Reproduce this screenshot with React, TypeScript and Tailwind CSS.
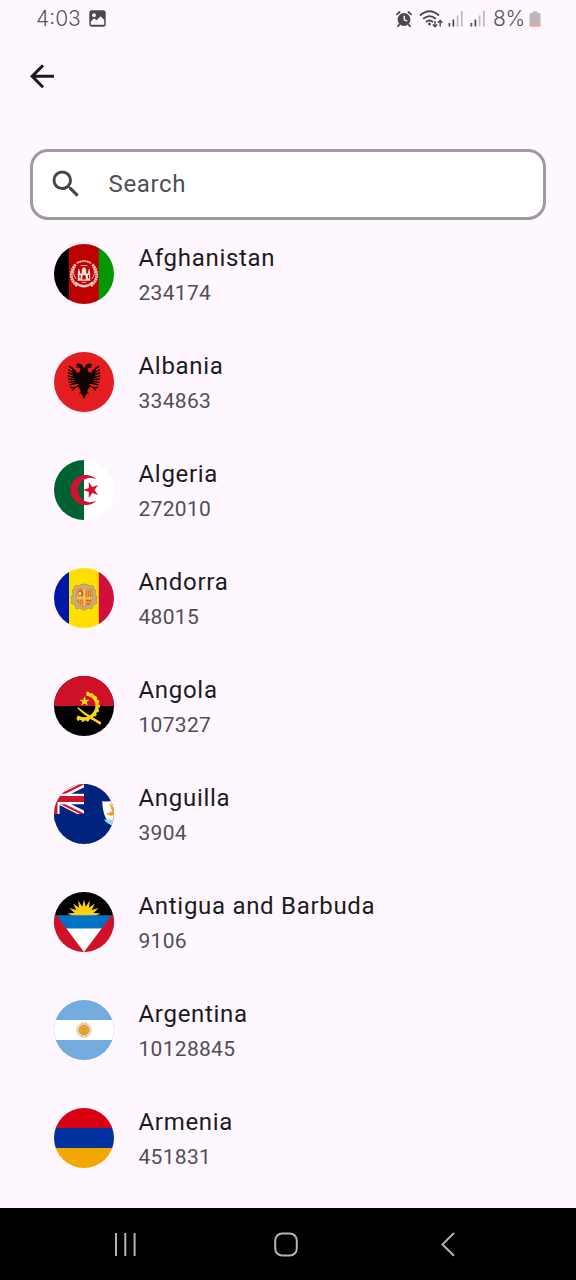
import type { ReactNode } from 'react';

type Country = { name: string; count: string; flag: ReactNode };

const angles = (n: number) => Array.from({ length: n }, (_, i) => (i * 360) / n);

const risingSun = Array.from({ length: 19 }, (_, i) => {
  const radius = i % 2 === 1 ? 17 : 10;
  const a = Math.PI - (i * Math.PI) / 18;
  return `${(30 + radius * Math.cos(a)).toFixed(2)},${(24.5 - radius * Math.sin(a)).toFixed(2)}`;
}).join(' ');

const Afghanistan = (
  <>
    <path fill="#000" d="M0 0h15.200v60H0z" />
    <path fill="#bf0000" d="M15 0h30v60H15z" />
    <path fill="#009900" d="M44.800 0H60v60H44.800z" />
    <g transform="translate(30 30.500) scale(1.120) translate(-30 -30.500)">
      <g stroke="#f0c9c4" fill="none">
        <path d="M22.500 21.500C17 28 17.500 36 24 40.500M37.500 21.500C43 28 42.500 36 36 40.500" strokeWidth="2.600" strokeDasharray="1.800 .4" />
        <path d="M23.500 20.500q6.500-4 13 0" strokeWidth="1.700" strokeDasharray="1.200 .4" />
        <path d="M22 37.500q8 7 16 0" strokeWidth="2" />
        <path d="M22 23.500q-3 6 1 11M38 23.500q3 6-1 11" strokeWidth=".8" />
      </g>
      <path fill="#f6dfdb" d="M24.500 36v-8l1-3 1 3v1.500h1.500V26q2-4 4 0v3.500h1.500V28l1-3 1 3v8z" />
      <path fill="#bf0000" d="M28.500 35v-3q1.500-2 3 0v3zM26 31h1v3h-1zM33.500 31h1v3h-1z" />
      <path stroke="#f0c9c4" strokeWidth=".8" d="M27 22.500h6M28 37.500h4" />
    </g>
  </>
);

const EagleHalf = (
  <g fill="#100303" stroke="#100303">
    <path
      stroke="none"
      d="M30.300 17.500 28.500 13.500Q26 10 21.500 12.500l2.200 1.200-2.200 1.800 3.500-.3 1.600 2.200-1.300 2.800-2.800.6Q19 18 17.500 13.500L19 22l1 5 1.500 4.500 3.500.5-2 2 3 3 1.500 5 2.800 5z"
    />
    <path
      fill="none"
      strokeWidth="1.400"
      d="M22 19.500 14.700 14M21 21.500 14 17.500M21 23.500 13.700 20.700M21 25.500 13.700 23.900M21.500 27.500 14 27M22 29.500 14.500 30.200M23 31 15.500 33"
    />
    <path fill="none" strokeWidth="1.100" d="M26 33 21 35.500 16.500 35.500M21 35.500 18 38.500M28 39 25.500 42" />
  </g>
);

const Albania = (
  <>
    <path fill="#e41e20" d="M0 0h60v60H0z" />
    {EagleHalf}
    <g transform="matrix(-1 0 0 1 60 0)">{EagleHalf}</g>
  </>
);

const Algeria = (
  <>
    <path fill="#fff" d="M0 0h60v60H0z" />
    <path fill="#006233" d="M0 0h30v60H0z" />
    <path fill="#d21034" d="M42.500 19.500A15.100 15.100 0 1 0 42.500 40.500A12.200 12.200 0 1 1 42.500 19.500z" />
    <path
      fill="#d21034"
      transform="translate(-7.200 -6) scale(1.200)"
      d="m30.300 30 4.700-1.600-.1-5 3 4 4.800-1.500-2.900 4.100 2.900 4.100-4.800-1.500-3 4 .1-5z"
    />
  </>
);

const Andorra = (
  <>
    <path fill="#0018a8" d="M0 0h15v60H0z" />
    <path fill="#fedf00" d="M15 0h30v60H15z" />
    <path fill="#d0103a" d="M44.800 0H60v60H44.800z" />
    <path
      fill="#c9ae72"
      stroke="#a98f5c"
      strokeWidth=".7"
      d="M20 19q2-3 4-1 6-4 12 0 2-2 4 1l-1 2 3 1-1 4q3 3 1 6l1 3-4 2-1 4-4-1q-4 4-8 0l-4 1-1-4-4-2 1-3q-2-3 1-6l-1-4 3-1z"
    />
    <path fill="#eda044" stroke="#c8803a" strokeWidth=".5" d="M22.500 21H38v10q0 5-7.800 8-7.700-3-7.700-8z" />
    <path fill="#f3d36b" d="M29.700 21h1.200v17h-1.200zM22.500 29.500H38v1.100H22.500z" />
    <path stroke="#d9702c" strokeWidth=".9" d="M32.500 22v7M34.500 22v7M36.500 22v7M24.500 32v3M26.500 32v4.500M28.500 32v5.500" />
    <path fill="#d9642c" d="M24 23q3-4 5 1v4h-4zM32 32h5v1.500h-5zM32 35h4v1.500h-4z" />
    <path fill="#f5ddc2" d="M25 24h2v3h-2z" />
  </>
);

const Angola = (
  <>
    <path fill="#000" d="M0 0h60v60H0z" />
    <path fill="#ce1126" d="M0 0h60v30H0z" />
    <g fill="none" stroke="#f9d616">
      <path d="M32.500 18C43 19 46.500 31 39.500 38.500 34.500 44 28 43.500 23 41" strokeWidth="3.400" />
      <path d="M32.500 16.500C44.500 18 49 31 41 39.500 35 46.500 27.500 45.500 22 42.500" strokeWidth="2" strokeDasharray="2.400 2.400" />
    </g>
    <path
      fill="#f9d616"
      d="M24 31q6.500 5.500 13.500 9.500l10 6-1.400 2.300-10-6.300q-7.500-4.500-12.800-10.300zM30.500 20l1.300 3.700h3.900l-3.100 2.300 1.200 3.800-3.300-2.200-3.300 2.200 1.200-3.800-3.100-2.300h3.900z"
    />
  </>
);

const Anguilla = (
  <>
    <path fill="#00247d" d="M0 0h60v60H0z" />
    <path stroke="#fff" strokeWidth="6" d="M-30 0 30 30M-30 30 30 0" />
    <path stroke="#cf142b" strokeWidth="2.200" d="M0 15.800 30 30.800M0 14.200 30-.8" />
    <path fill="#fff" d="M0 9.800h30v10.400H0z" />
    <path fill="#fff" d="M0 0h5.500v30H0z" />
    <path fill="#cf142b" d="M0 12h30v6H0zM0 0h3.500v30H0z" />
    <path fill="#00247d" d="M30 0h4v35h-4zM0 30h34v8H0z" />
    <path fill="#fff" d="M48.300 17q6 1.500 11.700-1v27q-11.500-7-11.700-26z" />
    <path fill="#9bd9e8" d="M50 35.500h10v6q-7-1-10-6z" />
    <path fill="#f6971f" d="M52 29q4 4 8 2v-8q-3-4-5-2 3 1 1.500 5l-1 3zM56 20q3-1 4 1v3z" />
    <path fill="#fff" d="M56 24q3 1 1.500 4L55 27z" />
  </>
);

const Antigua = (
  <>
    <path fill="#000" d="M0 0h60v24H0z" />
    <polygon fill="#fcd116" points={risingSun} />
    <path fill="#0072c6" d="M0 23.300h60V37H0z" />
    <path fill="#fff" d="M0 36.500h60V60H0z" />
    <path fill="#ce1126" d="M0 20 30 60H0zM60 20 30 60h30z" />
  </>
);

const Argentina = (
  <>
    <path fill="#74acdf" d="M0 0h60v60H0z" />
    <path fill="#fff" d="M0 20h60v20H0z" />
    <g stroke="#d6ac72" strokeWidth=".75">
      {angles(32).map((a) => (
        <path key={a} d="M30 25.500V22.300" transform={`rotate(${a} 30 30)`} />
      ))}
    </g>
    <circle cx="30" cy="30" r="4.600" fill="#eea92b" stroke="#b98638" strokeWidth=".8" />
    <path stroke="#c47a1c" strokeWidth=".7" fill="none" d="M27.500 29h1.700M30.800 29h1.700M30 29v2M28.500 32q1.500 1 3 0" />
  </>
);

const Armenia = (
  <>
    <path fill="#d90012" d="M0 0h60v20.200H0z" />
    <path fill="#0033a0" d="M0 20h60v20.200H0z" />
    <path fill="#f2a800" d="M0 40h60v20H0z" />
  </>
);

const countries: Country[] = [
  { name: 'Afghanistan', count: '234174', flag: Afghanistan },
  { name: 'Albania', count: '334863', flag: Albania },
  { name: 'Algeria', count: '272010', flag: Algeria },
  { name: 'Andorra', count: '48015', flag: Andorra },
  { name: 'Angola', count: '107327', flag: Angola },
  { name: 'Anguilla', count: '3904', flag: Anguilla },
  { name: 'Antigua and Barbuda', count: '9106', flag: Antigua },
  { name: 'Argentina', count: '10128845', flag: Argentina },
  { name: 'Armenia', count: '451831', flag: Armenia },
];

function SignalBars() {
  return (
    <svg className="h-4 w-[15px]" viewBox="0 0 15 16" fill="none" strokeWidth="1.700">
      <path stroke="#4b474d" d="M1.400 12v3.500M5.400 8.500v7" />
      <path stroke="#bdb7be" d="M9.600 4.500v11M13.800 0v15.500" />
    </svg>
  );
}

function StatusBar() {
  return (
    <header className="flex h-[38px] items-center justify-between pl-9 pr-[35px] font-['Inter',sans-serif] text-[#5a555c]">
      <div className="flex items-center">
        <span className="w-[53px] text-[21px] leading-[38px] font-light">4:03</span>
        <svg className="mb-0.5 h-[17px] w-[17px]" viewBox="0 0 17 17">
          <rect x=".3" y=".3" width="16.400" height="16.400" rx="2.600" fill="#4b474d" />
          <circle cx="5" cy="5.200" r="1.900" fill="#fef7ff" />
          <path fill="#fef7ff" d="M1.800 14.800v-3L5 8.300l2.600 2 4-4 3.600 3.700v4.800z" />
        </svg>
      </div>
      <div className="flex items-center">
        <svg className="mr-[7px] h-4 w-4" viewBox="0 0 16 16">
          <circle cx="8" cy="8.500" r="6.400" fill="#4b474d" />
          <path stroke="#4b474d" strokeWidth="1.800" strokeLinecap="round" d="M1 3.300 3.600 1M15 3.300 12.400 1M3.500 13.500 2 15.200M12.500 13.500l1.500 1.700" />
          <path stroke="#fef7ff" strokeWidth="1.400" fill="none" d="M8.300 4.800v4l3 1.300" />
        </svg>
        <svg className="mr-[5px] h-[19px] w-6" viewBox="0 0 24 19" fill="none" stroke="#4b474d">
          <path strokeWidth="1.700" d="M1 5.500q9.500-8.500 19 0M4 8.800q6.500-5.500 13 0M7 12q3.500-3 7 0" />
          <circle cx="10.500" cy="14" r="1" fill="#4b474d" />
          <path strokeWidth="1.400" d="M16 11v6M13.800 14.500l2.200 2.200 2.200-2.200M21.200 16.500v-6M19 12.700l2.200-2.200 2.200 2.200" />
        </svg>
        <SignalBars />
        <span className="w-[7px]" />
        <SignalBars />
        <span className="w-[44px] pl-2 text-[21px] leading-[38px] font-light tracking-[-0.300px]">8%</span>
        <svg className="mb-px h-4 w-3" viewBox="0 0 12 16">
          <path fill="#bdb5bd" d="M1.500 2h2V.5h5V2h2q1 0 1 1v11.500q0 1-1 1h-9q-1 0-1-1V3q0-1 1-1z" />
          <path fill="#f5a68e" d="M.5 13.300h11v1.200q0 1-1 1h-9q-1 0-1-1z" />
        </svg>
      </div>
    </header>
  );
}

function CountryRow({ name, count, flag }: Country) {
  return (
    <li className="flex h-[108px] items-center gap-[24.500px] px-[54px]">
      <svg className="h-[60px] w-[60px] shrink-0 rounded-full" viewBox="0 0 60 60">
        {flag}
      </svg>
      <div className="flex flex-col gap-0.5">
        <span className="text-[24px] leading-9 tracking-[0.700px] text-[#1d1b20]">{name}</span>
        <span className="text-[21px] leading-[30px] tracking-[0.300px] text-[#524e56]">{count}</span>
      </div>
    </li>
  );
}

export default function App() {
  return (
    <div className="flex h-[1280px] w-[576px] flex-col overflow-hidden bg-[#fef7ff] font-['Roboto',sans-serif]">
      <StatusBar />
      <div className="flex h-[76px] items-center pl-6">
        <button aria-label="Back">
          <svg className="h-9 w-9" viewBox="0 0 24 24" fill="#1d1b20">
            <path d="M20 11.200H7.830l5.590-5.590L12 4.200l-8 8 8 8 1.410-1.410L7.830 13.200H20z" />
          </svg>
        </button>
      </div>
      <label className="mx-[30px] mt-[34.500px] flex h-[71.500px] shrink-0 items-center rounded-[18px] border-3 border-[#9e9b9f] bg-white pl-[15px]">
        <svg className="h-9 w-9" viewBox="0 0 24 24" fill="#49454f">
          <path d="M15.500 14h-.79l-.28-.27A6.470 6.470 0 0 0 16 9.500 6.500 6.500 0 1 0 9.500 16c1.610 0 3.090-.59 4.230-1.570l.27.28v.79l5 4.990L20.490 19zm-6 0C7.010 14 5 11.990 5 9.500S7.010 5 9.500 5 14 7.010 14 9.500 11.990 14 9.500 14z" />
        </svg>
        <span className="pl-[24.500px] text-[24px] leading-9 tracking-[0.650px] text-[#524e56]">Search</span>
      </label>
      <ul className="flex h-[988px] shrink-0 flex-col">
        {countries.map((c) => (
          <CountryRow key={c.name} {...c} />
        ))}
      </ul>
      <nav className="flex h-[72px] shrink-0 items-center bg-black pl-[107px]">
        <svg className="h-9 w-9" viewBox="0 0 36 36" stroke="#b5b5b5" strokeWidth="2">
          <path d="M9 7v23M18.300 7v23M27.600 7v23" />
        </svg>
        <svg className="ml-[125px] h-9 w-9" viewBox="0 0 36 36" fill="none" stroke="#b5b5b5" strokeWidth="2">
          <rect x="7.200" y="7.500" width="21.600" height="22" rx="7" />
        </svg>
        <svg className="ml-[125px] h-9 w-9" viewBox="0 0 36 36" fill="none" stroke="#b5b5b5" strokeWidth="2">
          <path d="M25 7 13.500 18.400 25 29.800" />
        </svg>
      </nav>
    </div>
  );
}
